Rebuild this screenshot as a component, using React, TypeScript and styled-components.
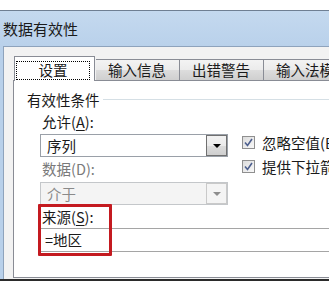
import React from 'react'
import styled, { createGlobalStyle } from 'styled-components'

const GlobalStyle = createGlobalStyle`
  html, body {
    margin: 0;
    padding: 0;
    background: #ffffff;
  }

  body {
    font-family: 'Noto Sans CJK SC', 'Liberation Sans', sans-serif;
    font-size: 14.5px;
    color: #1a1a1a;
  }
`

const Page = styled.div`
  width: 329px;
  height: 283px;
  overflow: hidden;
  display: flex;
  flex-direction: column;
  background: #fff;
  padding-top: 10px;
  box-sizing: border-box;
`

const Window = styled.div`
  flex: 1;
  display: flex;
  flex-direction: column;
  border-top: 1px solid #6f7f93;
  background: linear-gradient(#c4d9ef, #b8d0ea 40px);
  min-height: 0;
`

const TitleBar = styled.div`
  height: 35px;
  display: flex;
  align-items: center;
  padding-left: 3px;
  font-size: 15px;
  white-space: nowrap;
`

const Client = styled.div`
  flex: 1;
  margin-left: 3px;
  border-top: 1px solid #8ea3bc;
  border-left: 1px solid #8ea3bc;
  background: #f2f2f2;
  padding: 9px 0 1px 9px;
  display: flex;
  flex-direction: column;
  min-height: 0;
`

const BottomEdge = styled.div`
  height: 2px;
  background: #2b2b2b;
  margin-bottom: 2px;
`

const TabRow = styled.div`
  display: flex;
  align-items: flex-end;
  padding-left: 1px;
  margin-bottom: -1px;
  position: relative;
  z-index: 1;
  white-space: nowrap;
`

const Tab = styled.div<{ $active?: boolean }>`
  box-sizing: border-box;
  height: ${p => (p.$active ? 25 : 22)}px;
  padding: ${p => (p.$active ? '0 4px 0 1px' : '0 13px 0 12px')};
  margin-right: ${p => (p.$active ? 1 : 0)}px;
  display: flex;
  align-items: center;
  border: 1px solid #898c95;
  border-bottom: ${p => (p.$active ? 'none' : '1px solid #898c95')};
  border-left: ${p => (p.$active ? '1px solid #898c95' : 'none')};
  background: ${p =>
    p.$active ? '#ffffff' : 'linear-gradient(#f3f3f3, #ebebeb 50%, #dddddd 51%, #cfcfcf)'};
  line-height: 18px;
  flex-shrink: 0;
`

const FocusBox = styled.span`
  display: inline-flex;
  align-items: center;
  justify-content: center;
  width: 74px;
  height: 19px;
  box-sizing: border-box;
  border: 1px dotted #000;
  margin-top: 2px;
`

const Panel = styled.div`
  flex: 1;
  background: #fff;
  border: 1px solid #898c95;
  border-right: none;
  padding: 9px 0 0 13px;
  display: flex;
  flex-direction: column;
`

const GroupHeader = styled.div`
  display: flex;
  align-items: center;
  height: 18px;
  white-space: nowrap;
`

const GroupLine = styled.div`
  flex: 1;
  height: 1px;
  margin-left: 3px;
  background: #d5dfe5;
`

const GroupBody = styled.div`
  padding: 5px 0 0 13px;
  display: flex;
  flex-direction: column;
  position: relative;
`

const Columns = styled.div`
  display: grid;
  grid-template-columns: 188px 1fr;
  column-gap: 14px;
`

const Column = styled.div<{ $top?: number }>`
  display: flex;
  flex-direction: column;
  padding-top: ${p => p.$top || 0}px;
  min-width: 0;
`

const Label = styled.div<{ $disabled?: boolean; $gap?: number }>`
  height: 18px;
  line-height: 18px;
  padding-left: 2px;
  margin-top: ${p => p.$gap || 0}px;
  color: ${p => (p.$disabled ? '#7a7a7a' : '#1a1a1a')};
  white-space: nowrap;
`

const Key = styled.span`
  text-decoration: underline;
  text-underline-offset: 2px;
`

const SelectBox = styled.div<{ $disabled?: boolean }>`
  box-sizing: border-box;
  height: 23px;
  margin-top: ${p => (p.$disabled ? 4 : 3)}px;
  display: flex;
  align-items: center;
  border: 1px solid ${p => (p.$disabled ? '#c4c7ca' : '#9aa0a8')};
  background: ${p => (p.$disabled ? '#f4f4f4' : '#fff')};
  color: ${p => (p.$disabled ? '#8a8a8a' : '#1a1a1a')};
  padding-left: 6px;
`

const SelectText = styled.span`
  flex: 1;
  line-height: 18px;
`

const DropButton = styled.div<{ $disabled?: boolean }>`
  box-sizing: border-box;
  width: 21px;
  height: 21px;
  display: flex;
  align-items: center;
  justify-content: center;
  border: 1px solid ${p => (p.$disabled ? '#c9c9c9' : '#707070')};
  background: ${p =>
    p.$disabled ? '#f4f4f4' : 'linear-gradient(#f2f2f2, #ebebeb 50%, #dddddd 51%, #cfcfcf)'};
`

const Arrow = styled.div<{ $disabled?: boolean }>`
  width: 0;
  height: 0;
  border-left: 4px solid transparent;
  border-right: 4px solid transparent;
  border-top: 4px solid ${p => (p.$disabled ? '#8d8d8d' : '#000')};
`

const CheckRow = styled.div`
  display: flex;
  align-items: center;
  height: 24px;
  white-space: nowrap;
`

const CheckBox = styled.div`
  box-sizing: border-box;
  width: 13px;
  height: 13px;
  flex-shrink: 0;
  border: 1px solid #8f8f8f;
  background: linear-gradient(135deg, #dcdcdc, #f8f8f8);
  margin-right: 7px;
  display: flex;
  align-items: center;
  justify-content: center;
`

const SourceInput = styled.div`
  box-sizing: border-box;
  height: 24px;
  margin-top: 2px;
  margin-right: -20px;
  border-top: 1px solid #a5a5a5;
  border-bottom: 1px solid #a5a5a5;
  border-left: 1px solid #a5a5a5;
  display: flex;
  align-items: center;
  padding-left: 4px;
  line-height: 18px;
  white-space: nowrap;
`

const Highlight = styled.div`
  position: absolute;
  left: 11px;
  top: 96px;
  width: 74px;
  height: 52px;
  box-sizing: border-box;
  border: 3px solid #c41a20;
  border-radius: 1px;
  pointer-events: none;
`

const Check = () => (
  <svg width="9" height="9" viewBox="0 0 9 9">
    <path d="M1 4.5 L3.5 7.5 L8 1" fill="none" stroke="#4d5f8e" strokeWidth="1.6" />
  </svg>
)

const Select = ({ text, disabled }: { text: string; disabled?: boolean }) => (
  <SelectBox $disabled={disabled}>
    <SelectText>{text}</SelectText>
    <DropButton $disabled={disabled}>
      <Arrow $disabled={disabled} />
    </DropButton>
  </SelectBox>
)

const App = () => (
  <>
    <GlobalStyle />
    <Page>
      <Window>
        <TitleBar>数据有效性</TitleBar>
        <Client>
          <TabRow>
            <Tab $active>
              <FocusBox>设置</FocusBox>
            </Tab>
            <Tab>输入信息</Tab>
            <Tab>出错警告</Tab>
            <Tab>输入法模式</Tab>
          </TabRow>
          <Panel>
            <GroupHeader>
              有效性条件
              <GroupLine />
            </GroupHeader>
            <GroupBody>
              <Columns>
                <Column>
                  <Label>
                    允许(<Key>A</Key>):
                  </Label>
                  <Select text="序列" />
                  <Label $disabled $gap={3}>
                    数据(D):
                  </Label>
                  <Select text="介于" disabled />
                </Column>
                <Column $top={17}>
                  <CheckRow>
                    <CheckBox>
                      <Check />
                    </CheckBox>
                    忽略空值(B)
                  </CheckRow>
                  <CheckRow>
                    <CheckBox>
                      <Check />
                    </CheckBox>
                    提供下拉箭头(I)
                  </CheckRow>
                </Column>
              </Columns>
              <Label $gap={3}>
                来源(<Key>S</Key>):
              </Label>
              <SourceInput>=地区</SourceInput>
              <Highlight />
            </GroupBody>
          </Panel>
        </Client>
      </Window>
      <BottomEdge />
    </Page>
  </>
)

export default App
